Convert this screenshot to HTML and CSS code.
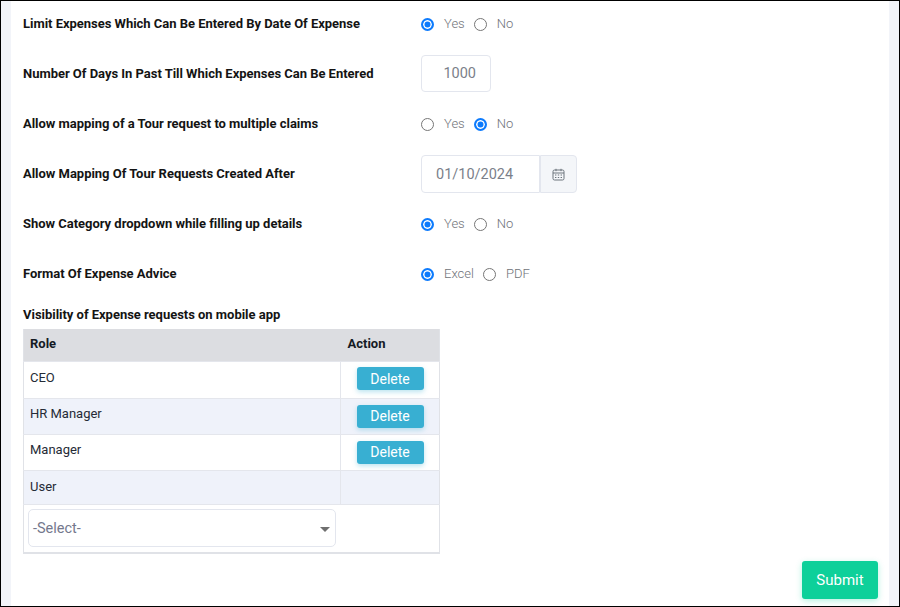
FILE: index.html
```html
<!DOCTYPE html>
<html lang="en">
<head>
<meta charset="utf-8">
<title>Expense Settings</title>
<link rel="stylesheet" href="styles.css">
</head>
<body>
<div class="frame">
  <main class="panel">
    <div class="row first">
      <div class="label">Limit Expenses Which Can Be Entered By Date Of Expense</div>
      <div class="control choice">
        <span class="radio on"></span><span class="opt">Yes</span><span class="radio"></span><span class="opt">No</span>
      </div>
    </div>
    <div class="row">
      <div class="label">Number Of Days In Past Till Which Expenses Can Be Entered</div>
      <div class="control"><div class="input num">1000</div></div>
    </div>
    <div class="row">
      <div class="label">Allow mapping of a Tour request to multiple claims</div>
      <div class="control choice">
        <span class="radio"></span><span class="opt">Yes</span><span class="radio on"></span><span class="opt">No</span>
      </div>
    </div>
    <div class="row">
      <div class="label">Allow Mapping Of Tour Requests Created After</div>
      <div class="control">
        <div class="input date">01/10/2024</div>
        <div class="addon">
          <svg width="13" height="13" viewBox="0 0 13 13" fill="none" stroke="#6c757d" stroke-width="1">
            <rect x="1" y="2" width="11" height="10" rx="1.5"/>
            <path d="M1 5h11M4 .8v2.4M9 .8v2.4"/>
            <path d="M3 7h1.4M5.8 7h1.4M8.6 7h1.4M3 9.5h1.4M5.8 9.5h1.4M8.6 9.5h1.4"/>
          </svg>
        </div>
      </div>
    </div>
    <div class="row">
      <div class="label">Show Category dropdown while filling up details</div>
      <div class="control choice">
        <span class="radio on"></span><span class="opt">Yes</span><span class="radio"></span><span class="opt">No</span>
      </div>
    </div>
    <div class="row">
      <div class="label">Format Of Expense Advice</div>
      <div class="control choice">
        <span class="radio on"></span><span class="opt">Excel</span><span class="radio"></span><span class="opt">PDF</span>
      </div>
    </div>
    <div class="label table-title">Visibility of Expense requests on mobile app</div>
    <table class="roles">
      <thead>
        <tr><th class="role">Role</th><th class="action">Action</th></tr>
      </thead>
      <tbody>
        <tr class="r1"><td>CEO</td><td class="act"><button class="del">Delete</button></td></tr>
        <tr class="alt r2"><td>HR Manager</td><td class="act"><button class="del">Delete</button></td></tr>
        <tr class="r2"><td>Manager</td><td class="act"><button class="del">Delete</button></td></tr>
        <tr class="alt r3"><td>User</td><td></td></tr>
        <tr class="r4">
          <td class="sel-cell">
            <div class="select">-Select-<span class="caret"></span></div>
          </td>
          <td class="blank"></td>
        </tr>
      </tbody>
    </table>
    <div class="actions"><button class="submit">Submit</button></div>
  </main>
</div>
</body>
</html>
```

FILE: styles.css
```css
* { box-sizing: border-box; }
html, body { margin: 0; height: 100%; }
body {
  font-family: Roboto, "Liberation Sans", sans-serif;
  background: #fff;
  overflow: hidden;
}
.frame {
  height: 607px;
  border: 1px solid #000;
  background: #f2f4f9;
  padding: 0 10px;
}
.panel {
  height: 100%;
  background: #fff;
  padding: 0 11px 0 12px;
}
.row {
  display: flex;
  height: 50px;
  align-items: center;
}
.row.first { height: 45px; margin-bottom: 3px; }
.label {
  width: 398px;
  font-size: 13px;
  font-weight: 700;
  letter-spacing: -.025px;
  color: #141414;
  padding-bottom: 1px;
}
.control {
  display: flex;
  align-items: center;
  color: #74788d;
  font-size: 14px;
}
.first .choice { padding-top: 2px; }
.radio {
  width: 13px;
  height: 13px;
  border: 1px solid #767676;
  border-radius: 50%;
  background: #fff;
}
.radio.on {
  border: 2px solid #0d7bfd;
  background: #0d7bfd;
  box-shadow: inset 0 0 0 1.5px #fff;
}
.opt {
  margin: 0 9px 0 10px;
  padding-bottom: 2px;
  color: #6f7278;
  font-size: 13px;
  font-weight: 300;
}
.input {
  height: 38px;
  border: 1px solid #e3e6ee;
  border-radius: 4px;
  background: #fff;
  color: #7b7f8a;
  font-size: 14.5px;
  display: flex;
  align-items: center;
}
.num { width: 70px; height: 37px; margin-top: -1px; justify-content: flex-end; padding-right: 14px; }
.date {
  width: 119px;
  padding-left: 14px;
  border-radius: 4px 0 0 4px;
}
.addon {
  width: 37px;
  height: 38px;
  background: #f4f6f9;
  border: 1px solid #e3e6ee;
  border-radius: 0 4px 4px 0;
  display: flex;
  align-items: center;
  justify-content: center;
}
.table-title { padding: 8px 0 0; height: 30px; }
.roles {
  border-collapse: collapse;
  table-layout: fixed;
  width: 417px;
  font-size: 13px;
  color: #252b36;
  border-bottom: 2px solid #e0e2e7;
  border-right: 1px solid #e0e2e7;
  border-left: 1px solid #e0e2e7;
}
.roles th {
  height: 32px;
  background: #dcdde1;
  text-align: left;
  font-weight: 700;
  font-size: 13px;
  color: #141a24;
  padding: 0 7px 2px 6px;
  border-bottom: 0;
}
.roles th.role { width: 317px; }
.roles th.action { padding-left: 7px; }
.roles td {
  padding: 0 6px 5px;
  border-top: 1px solid #e4e6ec;
  border-left: 1px solid #e4e6ec;
  vertical-align: middle;
}
.roles td:first-child { border-left: 0; }
.roles tr.r1 { height: 37px; }
.roles tr.r2 { height: 36px; }
.roles tr.r3 { height: 34px; }
.roles tr.r3 td:first-child { padding-bottom: 2px; }
.roles tr.r4 { height: 49px; }
.alt td { background: #eff2fa; }
.roles td.act { padding: 0 0 2px; text-align: center; }
.roles tr.r2 td.act { padding: 0; }
.del {
  display: block;
  margin: 0 auto;
  width: 67px;
  height: 23px;
  border: 0;
  border-radius: 3px;
  background: #38afd2;
  color: #fff;
  font-family: inherit;
  font-size: 14px;
  padding: 0;
  box-shadow: 0 2px 5px rgba(56,175,210,.35);
}
.roles td.sel-cell { padding: 0 4px; border-left: 0; }
.roles td.blank { border-left: 0; }
.select {
  position: relative;
  height: 38px;
  width: 308px;
  border: 1px solid #e3e6ee;
  border-radius: 5px;
  padding-left: 4px;
  display: flex;
  align-items: center;
  color: #74788d;
  font-size: 14.5px;
}
.caret {
  position: absolute;
  right: 5px;
  top: 17px;
  border-style: solid;
  border-width: 5px 5px 0;
  border-color: #6f6f6f transparent transparent;
}
.actions {
  display: flex;
  justify-content: flex-end;
  padding: 7px 0 0;
}
.submit {
  width: 76px;
  height: 38px;
  border: 0;
  border-radius: 3px;
  background: #0ed09a;
  color: #fff;
  font-family: inherit;
  font-size: 15px;
  font-weight: 400;
  box-shadow: 0 2px 6px rgba(14,208,154,.3);
  padding: 0;
}
```
